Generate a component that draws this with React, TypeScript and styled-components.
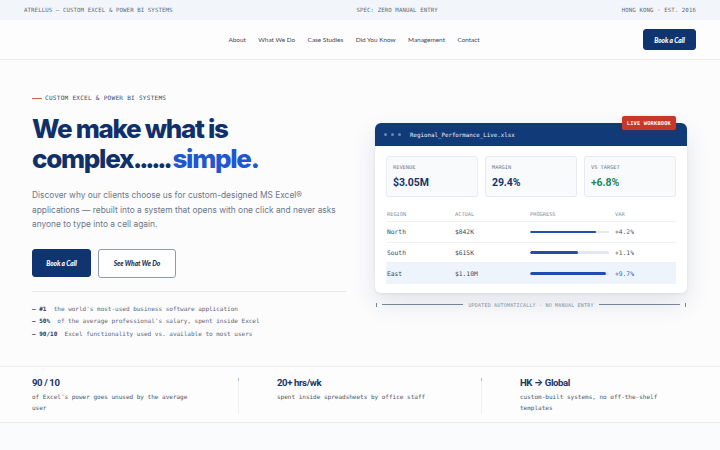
import React from "react";
import styled, { createGlobalStyle } from "styled-components";

const Global = createGlobalStyle`
  html, body { margin: 0; padding: 0; background: #fafbfc; }
  body { font-family: Inter, "Noto Sans", sans-serif; color: #1e293b; -webkit-font-smoothing: antialiased; }
  * { box-sizing: border-box; }
`;

const MONO = `"DejaVu Sans Mono", "Liberation Mono", monospace`;
const NAVY = "#0f3470";

const Page = styled.div`
  width: 720px;
  min-height: 450px;
  background: #fafbfc;
`;

const TopBar = styled.div`
  height: 20px;
  background: #f2f5f9;
  display: flex;
  align-items: center;
  justify-content: space-between;
  padding: 0 24px;
  font-family: ${MONO};
  font-size: 5.7px;
  letter-spacing: 0.02em;
  color: #5d6a7c;
`;

const Nav = styled.nav`
  height: 40px;
  background: #fdfdfe;
  border-bottom: 1px solid #e9edf2;
  display: flex;
  align-items: center;
  padding: 0 24px 0 65px;
`;

const NavLinks = styled.div`
  display: flex;
  gap: 12.5px;
  margin: 0 auto;
  font-family: Lato, "Noto Sans", sans-serif;
  font-size: 6.4px;
  color: #3a4658;
`;

const NavLink = styled.a`
  color: inherit;
  text-decoration: none;
`;

const Button = styled.a<{ $variant?: "solid" | "outline"; $w: number; $h: number }>`
  display: inline-flex;
  align-items: center;
  justify-content: center;
  width: ${(p) => p.$w}px;
  height: ${(p) => p.$h}px;
  border-radius: 3px;
  font-family: Lato, "Noto Sans", sans-serif;
  font-weight: 900;
  font-style: italic;
  font-size: 6.6px;
  letter-spacing: -0.01em;
  text-decoration: none;
  background: ${(p) => (p.$variant === "outline" ? "#ffffff" : NAVY)};
  color: ${(p) => (p.$variant === "outline" ? "#1c2f55" : "#ffffff")};
  border: 1px solid ${(p) => (p.$variant === "outline" ? "#8d9bb0" : NAVY)};
`;

const Hero = styled.section`
  display: grid;
  grid-template-columns: 314px 1fr;
  column-gap: 29px;
  align-items: start;
  padding: 34px 33px 26px 32px;
  background: #fcfcfd;
`;

const Left = styled.div`
  display: flex;
  flex-direction: column;
`;

const Eyebrow = styled.div`
  display: flex;
  align-items: center;
  gap: 3px;
  font-family: ${MONO};
  font-size: 6px;
  letter-spacing: 0.05em;
  color: #3a4a66;
  line-height: 8px;
  &::before {
    content: "";
    width: 10px;
    height: 1px;
    background: #d9634f;
  }
`;

const Heading = styled.h1`
  margin: 12px 0 0;
  font-family: Inter, sans-serif;
  font-weight: 800;
  font-size: 26px;
  line-height: 30px;
  letter-spacing: -1.3px;
  color: #10306a;
`;

const Dots = styled.span`
  letter-spacing: -3.1px;
  margin-right: 3px;
`;

const Accent = styled.span`
  color: #2156d1;
`;

const Lead = styled.p`
  margin: 14px 0 0;
  font-family: Inter, sans-serif;
  font-size: 8.4px;
  line-height: 14.5px;
  color: #6a7689;
`;

const Buttons = styled.div`
  display: flex;
  gap: 7px;
  margin-top: 17px;
`;

const Divider = styled.div`
  height: 1px;
  background: #e6eaf0;
  margin-top: 13px;
`;

const Stats = styled.ul`
  list-style: none;
  margin: 11px 0 0;
  padding: 0;
  font-family: ${MONO};
  font-size: 6px;
  line-height: 12.5px;
  color: #5b6779;
`;

const StatItem = styled.li`
  white-space: nowrap;
  b { color: #2c3a52; font-weight: 700; }
`;

const Right = styled.div`
  display: flex;
  flex-direction: column;
  gap: 9px;
  margin-top: 29px;
`;

const Card = styled.div`
  position: relative;
  border-radius: 6px;
  background: #ffffff;
  box-shadow: 0 10px 24px rgba(30, 50, 90, 0.12), 0 1px 3px rgba(30, 50, 90, 0.08);
`;

const CardHeader = styled.div`
  height: 23px;
  background: #103a78;
  border-radius: 6px 6px 0 0;
  display: flex;
  align-items: center;
  gap: 4px;
  padding: 0 9px;
  font-family: ${MONO};
  font-size: 5.8px;
  color: #e8eef8;
`;

const Dot = styled.span`
  width: 3px;
  height: 3px;
  border-radius: 50%;
  background: #6f86ab;
`;

const FileName = styled.span`
  margin-left: 5px;
`;

const Badge = styled.span`
  position: absolute;
  top: -7px;
  right: 11px;
  height: 14px;
  padding: 0 5px;
  display: flex;
  align-items: center;
  background: #c9362c;
  border-radius: 2px;
  font-family: ${MONO};
  font-weight: 700;
  font-size: 5.3px;
  letter-spacing: 0.04em;
  color: #ffffff;
  box-shadow: 0 2px 4px rgba(150, 30, 20, 0.25);
`;

const CardBody = styled.div`
  padding: 10px 11px 9px;
`;

const Kpis = styled.div`
  display: grid;
  grid-template-columns: repeat(3, 1fr);
  gap: 7px;
`;

const Kpi = styled.div`
  height: 41px;
  background: #f8fafc;
  border: 1px solid #e6ebf1;
  border-radius: 3px;
  padding: 6px 6px 0;
`;

const KpiLabel = styled.div`
  font-family: ${MONO};
  font-size: 5.3px;
  color: #6f7b8c;
  line-height: 8px;
`;

const KpiValue = styled.div<{ $color?: string }>`
  margin-top: 5px;
  font-family: Roboto, sans-serif;
  font-weight: 700;
  font-size: 10.5px;
  letter-spacing: -0.1px;
  color: ${(p) => p.$color || "#1a3366"};
`;

const Table = styled.div`
  margin-top: 10px;
  font-family: ${MONO};
`;

const Row = styled.div<{ $head?: boolean; $hl?: boolean }>`
  display: grid;
  grid-template-columns: 68px 75px 85px 1fr;
  align-items: center;
  height: ${(p) => (p.$head ? 15 : 20.5)}px;
  padding-left: 1px;
  border-bottom: 1px solid ${(p) => (p.$head || !p.$hl ? "#eef1f5" : "transparent")};
  background: ${(p) => (p.$hl ? "#eef4fc" : "transparent")};
  font-size: ${(p) => (p.$head ? 5.3 : 6.3)}px;
  color: ${(p) => (p.$head ? "#8390a3" : "#3d4a5e")};
  &:last-child { border-bottom: none; }
`;

const Var = styled.span<{ $hl?: boolean }>`
  color: ${(p) => (p.$hl ? "#2a5bb8" : "#4a5568")};
`;

const Track = styled.div`
  width: 79px;
  height: 2.5px;
  background: #e3e8ef;
  border-radius: 2px;
  overflow: hidden;
`;

const Fill = styled.div`
  height: 100%;
  background: #1f4fae;
  border-radius: 2px;
`;

const Caption = styled.div`
  display: flex;
  align-items: center;
  gap: 5px;
  padding: 0 1px;
  font-family: ${MONO};
  font-size: 5px;
  letter-spacing: 0.04em;
  color: #8b97a8;
  white-space: nowrap;
`;

const Tick = styled.span`
  width: 1px;
  height: 4px;
  background: #7b879a;
`;

const Rule = styled.span`
  flex: 1;
  height: 1px;
  background: #7d899b;
`;

const Strip = styled.section`
  display: grid;
  grid-template-columns: 206px 243px 1fr;
  padding: 10px 32px 0;
  height: 57px;
  background: #fdfdfe;
  border-top: 1px solid #e9edf2;
  border-bottom: 1px solid #e9edf2;
`;

const StripCol = styled.div<{ $sep?: boolean }>`
  position: relative;
  padding-left: ${(p) => (p.$sep ? 38 : 0)}px;
  height: 37px;
  border-left: ${(p) => (p.$sep ? "1px solid #eef1f4" : "none")};
  &::before {
    content: "";
    display: ${(p) => (p.$sep ? "block" : "none")};
    position: absolute;
    left: -1px;
    top: 1px;
    width: 1px;
    height: 3px;
    background: #b5bfcc;
  }
`;

const StripTitle = styled.div`
  font-family: Roboto, sans-serif;
  font-weight: 700;
  font-size: 9.6px;
  letter-spacing: -0.4px;
  line-height: 12px;
  color: #1a3366;
`;

const Arrow = styled.span`
  font-family: Inter, sans-serif;
  font-weight: 700;
`;

const StripText = styled.div`
  margin-top: 2px;
  max-width: 165px;
  font-family: ${MONO};
  font-size: 6px;
  line-height: 11px;
  color: #4a5566;
`;

const rows = [
  { r: "North", a: "$842K", p: 84, v: "+4.2%" },
  { r: "South", a: "$615K", p: 61, v: "+1.1%" },
  { r: "East", a: "$1.10M", p: 96, v: "+9.7%", hl: true },
];

export default function App() {
  return (
    <Page>
      <Global />
      <TopBar>
        <span>ATRELLUS — CUSTOM EXCEL &amp; POWER BI SYSTEMS</span>
        <span>SPEC: ZERO MANUAL ENTRY</span>
        <span>HONG KONG · EST. 2016</span>
      </TopBar>
      <Nav>
        <NavLinks>
          {["About", "What We Do", "Case Studies", "Did You Know", "Management", "Contact"].map((l) => (
            <NavLink key={l} href="#">{l}</NavLink>
          ))}
        </NavLinks>
        <Button href="#" $w={53} $h={21}>Book a Call</Button>
      </Nav>
      <Hero>
        <Left>
          <Eyebrow>CUSTOM EXCEL &amp; POWER BI SYSTEMS</Eyebrow>
          <Heading>
            We make what is
            <br />
            complex<Dots>......</Dots><Accent>simple.</Accent>
          </Heading>
          <Lead>
            Discover why our clients choose us for custom-designed MS Excel® applications — rebuilt into a system that
            opens with one click and never asks anyone to type into a cell again.
          </Lead>
          <Buttons>
            <Button href="#" $w={59} $h={28}>Book a Call</Button>
            <Button href="#" $variant="outline" $w={78} $h={29}>See What We Do</Button>
          </Buttons>
          <Divider />
          <Stats>
            <StatItem><b>— #1</b>&nbsp; the world's most-used business software application</StatItem>
            <StatItem><b>— 50%</b>&nbsp; of the average professional's salary, spent inside Excel</StatItem>
            <StatItem><b>— 90/10</b>&nbsp; Excel functionality used vs. available to most users</StatItem>
          </Stats>
        </Left>
        <Right>
          <Card>
            <Badge>LIVE WORKBOOK</Badge>
            <CardHeader>
              <Dot />
              <Dot />
              <Dot />
              <FileName>Regional_Performance_Live.xlsx</FileName>
            </CardHeader>
            <CardBody>
              <Kpis>
                <Kpi>
                  <KpiLabel>REVENUE</KpiLabel>
                  <KpiValue>$3.05M</KpiValue>
                </Kpi>
                <Kpi>
                  <KpiLabel>MARGIN</KpiLabel>
                  <KpiValue>29.4%</KpiValue>
                </Kpi>
                <Kpi>
                  <KpiLabel>VS TARGET</KpiLabel>
                  <KpiValue $color="#23895a">+6.8%</KpiValue>
                </Kpi>
              </Kpis>
              <Table>
                <Row $head>
                  <span>REGION</span>
                  <span>ACTUAL</span>
                  <span>PROGRESS</span>
                  <span>VAR</span>
                </Row>
                {rows.map((row) => (
                  <Row key={row.r} $hl={row.hl}>
                    <span>{row.r}</span>
                    <span>{row.a}</span>
                    <Track>
                      <Fill style={{ width: `${row.p}%` }} />
                    </Track>
                    <Var $hl={row.hl}>{row.v}</Var>
                  </Row>
                ))}
              </Table>
            </CardBody>
          </Card>
          <Caption>
            <Tick />
            <Rule />
            <span>UPDATED AUTOMATICALLY · NO MANUAL ENTRY</span>
            <Rule />
            <Tick />
          </Caption>
        </Right>
      </Hero>
      <Strip>
        <StripCol>
          <StripTitle>90 / 10</StripTitle>
          <StripText>of Excel's power goes unused by the average user</StripText>
        </StripCol>
        <StripCol $sep>
          <StripTitle>20+ hrs/wk</StripTitle>
          <StripText>spent inside spreadsheets by office staff</StripText>
        </StripCol>
        <StripCol $sep>
          <StripTitle>HK <Arrow>→</Arrow> Global</StripTitle>
          <StripText>custom-built systems, no off-the-shelf templates</StripText>
        </StripCol>
      </Strip>
    </Page>
  );
}
